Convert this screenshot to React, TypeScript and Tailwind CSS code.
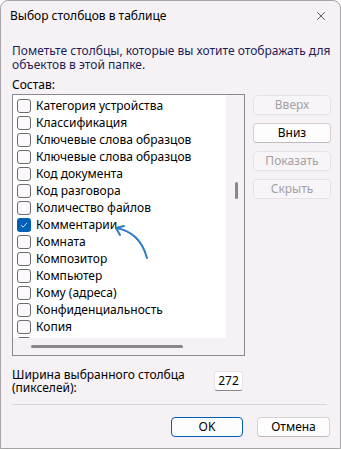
import { X } from "lucide-react";

const items = [
  "Категория устройства",
  "Классификация",
  "Ключевые слова образцов",
  "Ключевые слова образцов",
  "Код документа",
  "Код разговора",
  "Количество файлов",
  "Комментарии",
  "Комната",
  "Композитор",
  "Компьютер",
  "Кому (адреса)",
  "Конфиденциальность",
  "Копия",
  "Краткое описание",
];

const CheckRow = ({ label, checked }: { label: string; checked?: boolean }) => (
  <div className="flex h-[17px] items-center gap-[5px] shrink-0">
    {checked ? (
      <div className="w-[14px] h-[14px] rounded-[3px] bg-[#005fb8] flex items-center justify-center">
        <svg width="10" height="10" viewBox="0 0 10 10">
          <path d="M2 5.2 L4.1 7.2 L8 2.8" fill="none" stroke="#cfe3f7" strokeWidth="1" />
        </svg>
      </div>
    ) : (
      <div className="w-[14px] h-[14px] rounded-[3px] border border-[#6e6a6e] bg-[#fbf9fb]" />
    )}
    <span className="whitespace-nowrap">{label}</span>
  </div>
);

const SideButton = ({ label, enabled }: { label: string; enabled?: boolean }) => (
  <button
    className={`h-[20px] w-[78px] rounded-[4px] border text-[12px] leading-none ${
      enabled
        ? "bg-[#fdfdfd] border-[#d6d2d6] border-b-[#bdb9bd] text-black"
        : "bg-[#f8f5f8] border-[#e6e1e6] text-[#a49fa4]"
    }`}
  >
    {label}
  </button>
);

const App = () => {
  return (
    <div
      className="w-[341px] h-[450px] bg-white text-[12px] text-black"
      style={{ fontFamily: '"Noto Sans", "Open Sans", sans-serif' }}
    >
      <div className="w-[341px] h-[449px] bg-[#f6f1f5] border border-[#a8a4a8] rounded-t-[8px] flex flex-col">
        {/* title bar */}
        <div className="h-[30px] flex items-center justify-between pl-[9px] pr-[12px] shrink-0">
          <span>Выбор столбцов в таблице</span>
          <X size={14} strokeWidth={1.2} className="text-[#1a1a1a]" />
        </div>

        <div className="flex flex-col px-[11px] pr-[9px]">
          <div className="mt-[13px] leading-[14px] text-[#1b1f55]">
            Пометьте столбцы, которые вы хотите отображать для
            <br />
            объектов в этой папке.
          </div>
          <div className="mt-[6px] leading-[14px]">Состав:</div>

          <div className="mt-[2px] flex gap-[8px]">
            {/* list box */}
            <div className="relative w-[233px] h-[262px] border border-[#8b8893] flex flex-col">
              <div className="flex flex-1 min-h-0">
                <div className="w-[213px] bg-white overflow-hidden flex flex-col pt-[2px] pl-[4px]">
                  {items.map((it, i) => (
                    <CheckRow key={i} label={it} checked={it === "Комментарии"} />
                  ))}
                </div>
                <div className="flex-1 flex justify-center pt-[87px] pl-[2px]">
                  <div className="w-[3px] h-[17px] rounded-full bg-[#8a868a]" />
                </div>
              </div>
              <div className="h-[17px] shrink-0 flex items-center pl-[18px]">
                <div className="w-[152px] h-[3px] rounded-full bg-[#8a868a]" />
              </div>

              {/* annotation arrow */}
              <svg
                className="absolute left-[94px] top-[126px]"
                width="50"
                height="45"
                viewBox="88 126 50 45"
              >
                <path
                  d="M97 133 Q 121 137 128 163"
                  fill="none"
                  stroke="#2e7cc4"
                  strokeWidth="2"
                  strokeLinecap="round"
                />
                <path
                  d="M105 131 L97 133 L101 140"
                  fill="none"
                  stroke="#2e7cc4"
                  strokeWidth="2"
                  strokeLinecap="round"
                  strokeLinejoin="round"
                />
              </svg>
            </div>

            {/* side buttons */}
            <div className="flex flex-col gap-[8px] pt-[1px]">
              <SideButton label="Вверх" />
              <SideButton label="Вниз" enabled />
              <SideButton label="Показать" />
              <SideButton label="Скрыть" />
            </div>
          </div>

          <div className="mt-[12px] flex items-center">
            <div className="w-[202px] leading-[13px]">
              Ширина выбранного столбца
              <br />
              (пикселей):
            </div>
            <div className="w-[29px] h-[20px] bg-white border border-[#e6e2e6] border-b-[#8a868a] rounded-[3px] flex items-center justify-center">
              272
            </div>
          </div>

          <div className="mt-[10px] h-px bg-[#d9d4d9] w-[315px]" />

          <div className="mt-[12px] flex justify-end gap-[14px] pr-[1px]">
            <button className="w-[72px] h-[20px] rounded-[4px] bg-[#fdfdfd] border-[1.5px] border-[#005fb8] leading-none">
              OK
            </button>
            <button className="w-[73px] h-[20px] rounded-[4px] bg-[#fdfdfd] border border-[#d6d2d6] border-b-[#bdb9bd] leading-none">
              Отмена
            </button>
          </div>
        </div>
      </div>
    </div>
  );
};

export default App;
